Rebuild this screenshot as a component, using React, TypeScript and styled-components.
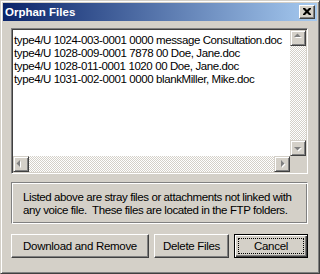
import styled, { createGlobalStyle } from 'styled-components';

const files = [
  'type4/U 1024-003-0001 0000 message Consultation.doc',
  'type4/U 1028-009-0001 7878 00 Doe, Jane.doc',
  'type4/U 1028-011-0001 1020 00 Doe, Jane.doc',
  'type4/U 1031-002-0001 0000 blankMiller, Mike.doc',
];

type Dir = 'up' | 'down' | 'left' | 'right';

const arrowPoints: Record<Dir, string> = {
  up: '4,6 11,6 7.5,2.5',
  down: '4,6 11,6 7.5,9.5',
  left: '6,4 6,11 2.5,7.5',
  right: '6,4 6,11 9.5,7.5',
};

const Arrow = ({ dir }: { dir: Dir }) => {
  const horiz = dir === 'left' || dir === 'right';
  return (
    <svg width="12" height="12" viewBox="0 0 12 12">
      <g transform={horiz ? 'translate(-1,-2)' : 'translate(-2,-1)'}>
        <polygon points={arrowPoints[dir]} fill="#ffffff" transform="translate(1,1)" />
        <polygon points={arrowPoints[dir]} fill="#808080" />
      </g>
    </svg>
  );
};

const App = () => {
  return (
    <>
      <GlobalStyle />
      <Window>
        <TitleBar>
          <Title>Orphan Files</Title>
          <CloseButton>
            <svg width="8" height="7" viewBox="0 0 8 7">
              <path d="M0 0h2l2 2 2-2h2v1l-2.5 2.5L8 6v1H6L4 5 2 7H0V6l2.5-2.5L0 1z" fill="#000" />
            </svg>
          </CloseButton>
        </TitleBar>
        <Body>
          <ListBox>
            <Items>
              {files.map((f) => (
                <Item key={f}>{f}</Item>
              ))}
            </Items>
            <VScroll>
              <ScrollButton><Arrow dir="up" /></ScrollButton>
              <Track />
              <ScrollButton><Arrow dir="down" /></ScrollButton>
            </VScroll>
            <HScroll>
              <ScrollButton><Arrow dir="left" /></ScrollButton>
              <Track />
              <ScrollButton><Arrow dir="right" /></ScrollButton>
            </HScroll>
            <Corner />
          </ListBox>
          <InfoBox>
            Listed above are stray files or attachments not linked with any voice file.&nbsp; These files are
            located in the FTP folders.
          </InfoBox>
          <Buttons>
            <Button $width={138}>Download and Remove</Button>
            <Button $width={75}>Delete Files</Button>
            <DefaultButton $width={74}>
              <Focus>Cancel</Focus>
            </DefaultButton>
          </Buttons>
        </Body>
      </Window>
    </>
  );
};

export default App;

const GlobalStyle = createGlobalStyle`
  html, body {
    margin: 0;
    padding: 0;
    background: #d4d0c8;
  }
  body {
    font-family: "Liberation Sans", Arial, sans-serif;
  }
`;

const Window = styled.div`
  width: 320px;
  height: 274px;
  box-sizing: border-box;
  background: #d4d0c8;
  border: 1px solid;
  border-color: #d4d0c8 #404040 #404040 #d4d0c8;
  box-shadow: inset 1px 1px 0 #ffffff, inset -1px -1px 0 #808080;
  padding: 2px;
  display: flex;
  flex-direction: column;
`;

const TitleBar = styled.div`
  height: 18px;
  display: flex;
  align-items: center;
  justify-content: space-between;
  padding: 0 2px;
  background: linear-gradient(to right, #0a246a, #a6caf0);
`;

const Title = styled.div`
  color: #ffffff;
  font-weight: bold;
  font-size: 11.5px;
`;

const raised = `
  background: #d4d0c8;
  box-sizing: border-box;
  border: 1px solid;
  border-color: #ffffff #404040 #404040 #ffffff;
  box-shadow: inset -1px -1px 0 #808080;
`;

const CloseButton = styled.div`
  ${raised}
  width: 16px;
  height: 14px;
  display: flex;
  align-items: center;
  justify-content: center;
  padding: 0 1px 1px 0;
`;

const Body = styled.div`
  flex: 1;
  display: flex;
  flex-direction: column;
  padding: 7px 9px 0 8px;
`;

const ListBox = styled.div`
  height: 146px;
  box-sizing: border-box;
  border: 1px solid;
  border-color: #808080 #ffffff #ffffff #808080;
  box-shadow: inset 1px 1px 0 #404040, inset -1px -1px 0 #d4d0c8;
  padding: 1px;
  display: grid;
  grid-template-columns: minmax(0, 1fr) 16px;
  grid-template-rows: minmax(0, 1fr) 16px;
`;

const Items = styled.div`
  background: #ffffff;
  overflow: hidden;
  padding: 4px 0 0 1px;
  font-size: 11.5px;
  letter-spacing: -0.4px;
  color: #000000;
`;

const Item = styled.div`
  height: 13px;
  line-height: 13px;
  white-space: nowrap;
`;

const Track = styled.div`
  flex: 1;
  background-color: #ffffff;
  background-image: conic-gradient(#d4d0c8 25%, #ffffff 0 50%, #d4d0c8 0 75%, #ffffff 0);
  background-size: 2px 2px;
`;

const VScroll = styled.div`
  display: flex;
  flex-direction: column;
`;

const HScroll = styled.div`
  display: flex;
`;

const ScrollButton = styled.div`
  width: 16px;
  height: 16px;
  box-sizing: border-box;
  background: #d4d0c8;
  border: 1px solid;
  border-color: #d4d0c8 #404040 #404040 #d4d0c8;
  box-shadow: inset 1px 1px 0 #ffffff, inset -1px -1px 0 #808080;
  display: flex;
  align-items: center;
  justify-content: center;
`;

const Corner = styled.div`
  background: #d4d0c8;
`;

const InfoBox = styled.div`
  margin-top: 8px;
  height: 42px;
  box-sizing: border-box;
  border: 1px solid;
  border-color: #808080 #ffffff #ffffff #808080;
  box-shadow: inset 1px 1px 0 #ffffff, inset -1px -1px 0 #808080;
  padding: 8px 8px 0 11px;
  font-size: 11.5px;
  letter-spacing: -0.4px;
  line-height: 13px;
  color: #000000;
`;

const Buttons = styled.div`
  margin-top: 10px;
  display: flex;
  gap: 5px;
`;

const Button = styled.div<{ $width: number }>`
  ${raised}
  width: ${(p) => p.$width}px;
  height: 24px;
  display: flex;
  align-items: center;
  justify-content: center;
  font-size: 11.5px;
  letter-spacing: -0.3px;
  color: #000000;
`;

const DefaultButton = styled(Button)`
  border: 1px solid #000000;
  box-shadow: inset 1px 1px 0 #ffffff, inset -1px -1px 0 #404040, inset -2px -2px 0 #808080;
  padding: 3px;
`;

const Focus = styled.div`
  flex: 1;
  align-self: stretch;
  display: flex;
  align-items: center;
  justify-content: center;
  outline: 1px dotted #000000;
  outline-offset: -1px;
`;
